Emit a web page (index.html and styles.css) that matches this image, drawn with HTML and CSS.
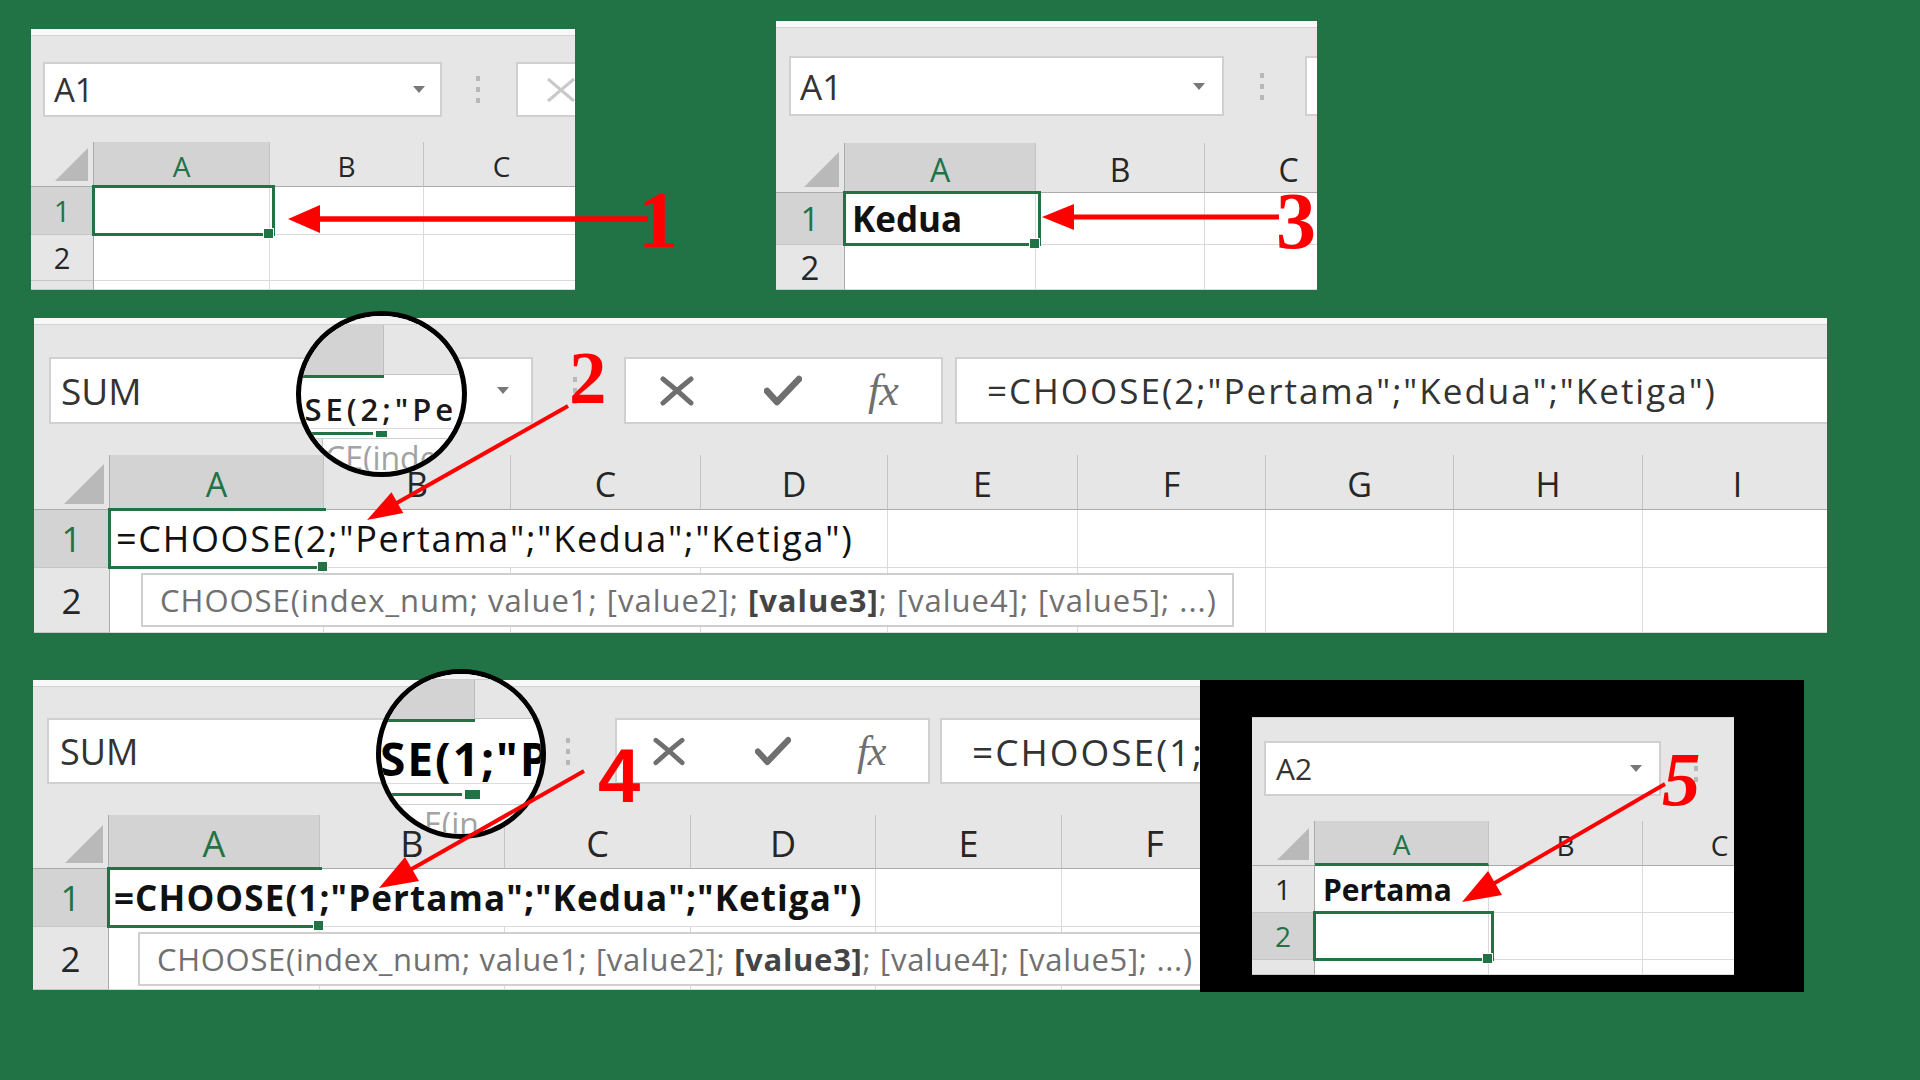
FILE: index.html
```html
<!DOCTYPE html>
<html lang="id">
<head>
<meta charset="utf-8">
<title>CHOOSE</title>
<link rel="stylesheet" href="styles.css">
</head>
<body>

<section class="shot s1">
  <div class="strip"></div>
  <div class="fbar">
    <div class="namebox"><span>A1</span><i class="caret"></i></div>
    <div class="vdots"><i></i><i></i><i></i></div>
    <div class="fxbox cutbox">
      <svg class="xlight" viewBox="0 0 30 26" width="30" height="26"><path d="M2 2 L28 24 M28 2 L2 24" stroke="#c9c9c9" stroke-width="3" fill="none"/></svg>
    </div>
  </div>
  <div class="sheet">
    <div class="corner"><i class="tri"></i></div>
    <div class="ch sel">A</div><div class="ch">B</div><div class="ch">C</div>
    <div class="rh sel">1</div><div class="c act"><i class="handle"></i></div><div class="c"></div><div class="c"></div>
    <div class="rh">2</div><div class="c"></div><div class="c"></div><div class="c"></div>
    <div class="rh"></div><div class="c"></div><div class="c"></div><div class="c"></div>
  </div>
</section>

<section class="shot s3">
  <div class="strip"></div>
  <div class="fbar">
    <div class="namebox"><span>A1</span><i class="caret"></i></div>
    <div class="vdots"><i></i><i></i><i></i></div>
    <div class="fxbox cutbox"></div>
  </div>
  <div class="sheet">
    <div class="corner"><i class="tri"></i></div>
    <div class="ch sel">A</div><div class="ch">B</div><div class="ch">C</div>
    <div class="rh sel">1</div><div class="c act bold">Kedua<i class="handle"></i></div><div class="c"></div><div class="c"></div>
    <div class="rh">2</div><div class="c"></div><div class="c"></div><div class="c"></div>
  </div>
</section>

<section class="shot s2">
  <div class="strip"></div>
  <div class="fbar">
    <div class="namebox"><span>SUM</span><i class="caret"></i></div>
    <div class="vdots"><i></i><i></i><i></i></div>
    <div class="fxbox">
      <svg class="ico" viewBox="0 0 34 30" width="34" height="30"><path d="M3 3 Q17 14 31 27 M31 3 Q16 15 3 27" stroke="#6f6f6f" stroke-width="5" fill="none" stroke-linecap="round"/></svg>
      <svg class="ico" viewBox="0 0 38 32" width="38" height="32"><path d="M3 16 L13 27 L35 4" stroke="#6f6f6f" stroke-width="6.5" fill="none" stroke-linecap="round" stroke-linejoin="round"/></svg>
      <span class="fx">fx</span>
    </div>
    <div class="formula"><span>=CHOOSE(2;"Pertama";"Kedua";"Ketiga")</span></div>
  </div>
  <div class="sheet">
    <div class="corner"><i class="tri"></i></div>
    <div class="ch sel">A</div><div class="ch">B</div><div class="ch">C</div><div class="ch">D</div><div class="ch">E</div><div class="ch">F</div><div class="ch">G</div><div class="ch">H</div><div class="ch">I</div>
    <div class="rh sel">1</div><div class="c act wide"><span>=CHOOSE(2;"Pertama";"Kedua";"Ketiga")</span><i class="handle"></i></div><div class="c"></div><div class="c"></div><div class="c"></div><div class="c"></div><div class="c"></div>
    <div class="rh">2</div><div class="c"></div><div class="c"></div><div class="c"></div><div class="c"></div><div class="c"></div><div class="c"></div><div class="c"></div><div class="c"></div><div class="c"></div>
    <div class="tip"><span>CHOOSE(index_num; value1; [value2]; <b>[value3]</b>; [value4]; [value5]; ...)</span></div>
  </div>
</section>

<section class="shot s4">
  <div class="strip"></div>
  <div class="fbar">
    <div class="namebox"><span>SUM</span><i class="caret"></i></div>
    <div class="vdots"><i></i><i></i><i></i></div>
    <div class="fxbox">
      <svg class="ico" viewBox="0 0 34 30" width="32" height="29"><path d="M3 3 Q17 14 31 27 M31 3 Q16 15 3 27" stroke="#6f6f6f" stroke-width="5" fill="none" stroke-linecap="round"/></svg>
      <svg class="ico" viewBox="0 0 38 32" width="36" height="31"><path d="M3 16 L13 27 L35 4" stroke="#6f6f6f" stroke-width="6.5" fill="none" stroke-linecap="round" stroke-linejoin="round"/></svg>
      <span class="fx">fx</span>
    </div>
    <div class="formula"><span>=CHOOSE(1;"Pertama";"Kedua";"Ketiga")</span></div>
  </div>
  <div class="sheet">
    <div class="corner"><i class="tri"></i></div>
    <div class="ch sel">A</div><div class="ch">B</div><div class="ch">C</div><div class="ch">D</div><div class="ch">E</div><div class="ch">F</div>
    <div class="rh sel">1</div><div class="c act wide bold"><span>=CHOOSE(1;"Pertama";"Kedua";"Ketiga")</span><i class="handle"></i></div><div class="c"></div><div class="c"></div>
    <div class="rh">2</div><div class="c"></div><div class="c"></div><div class="c"></div><div class="c"></div><div class="c"></div><div class="c"></div>
    <div class="tip"><span>CHOOSE(index_num; value1; [value2]; <b>[value3]</b>; [value4]; [value5]; ...)</span></div>
  </div>
</section>

<section class="frame">
  <div class="shot s5">
    <div class="fbar">
      <div class="namebox"><span>A2</span><i class="caret"></i></div>
      <div class="vdots"><i></i><i></i><i></i></div>
    </div>
    <div class="sheet">
      <div class="corner"><i class="tri"></i></div>
      <div class="ch sel selline">A</div><div class="ch">B</div><div class="ch">C</div>
      <div class="rh">1</div><div class="c bold">Pertama</div><div class="c"></div><div class="c"></div>
      <div class="rh sel">2</div><div class="c act"><i class="handle"></i></div><div class="c"></div><div class="c"></div>
      <div class="rh"></div><div class="c"></div><div class="c"></div><div class="c"></div>
    </div>
  </div>
</section>

<div class="lens l2">
  <div class="l-top"></div>
  <div class="l-head"><i class="l-hs"></i><i class="l-hr"></i></div>
  <div class="l-green"></div>
  <div class="l-row">OSE(2;"Pe</div>
  <div class="l-bot"><i class="l-gl"></i><i class="l-sq"></i></div>
  <div class="l-tip"><i class="l-rh"></i><span>CE(inde</span></div>
</div>

<div class="lens l4">
  <div class="l-top"></div>
  <div class="l-head"><i class="l-hs"></i><i class="l-hr"></i></div>
  <div class="l-green"></div>
  <div class="l-row">SE(1;"P</div>
  <div class="l-bot"><i class="l-gl"></i><i class="l-sq"></i></div>
  <div class="l-tip"><i class="l-rh"></i><span>E(in</span></div>
</div>

<svg class="annot" width="1920" height="1080" viewBox="0 0 1920 1080">
  <g stroke="#ff0000" fill="none">
    <line x1="648" y1="219" x2="316" y2="219" stroke-width="5.5"/>
    <line x1="1279" y1="217" x2="1072" y2="217" stroke-width="5"/>
    <line x1="568" y1="406" x2="395" y2="504" stroke-width="4"/>
    <line x1="584" y1="771" x2="410" y2="870" stroke-width="4"/>
    <line x1="1665" y1="784" x2="1493" y2="884" stroke-width="4"/>
  </g>
  <g fill="#ff0000">
    <polygon points="288,219 320,205 320,233"/>
    <polygon points="1042,217 1074,204 1074,230"/>
    <polygon points="367,520 391.5,492.3 403.3,513.1"/>
    <polygon points="379,888 405,857 419,881"/>
    <polygon points="1462,902 1488,871 1502,895"/>
    <text class="n-serif" x="638" y="247">1</text>
    <text class="n-serif" x="1276" y="248">3</text>
    <text class="n-serif n2" x="569" y="403">2</text>
    <text class="n-sans" x="598" y="802">4</text>
    <text class="n-serif n5" x="1662" y="805">5</text>
  </g>
</svg>

</body>
</html>
```

FILE: styles.css
```css
html, body {
  margin: 0;
  padding: 0;
}
body {
  width: 1920px;
  height: 1080px;
  overflow: hidden;
  position: relative;
  background: #217346;
  font-family: "Open Sans", "Noto Sans", sans-serif;
  color: #262626;
}

/* ---------- screenshot panels ---------- */
.shot {
  position: absolute;
  overflow: hidden;
  background: #e6e6e6;
  display: flex;
  flex-direction: column;
  box-sizing: border-box;
}
.strip {
  flex: none;
  height: 6px;
  background: #f8f8f8;
  border-bottom: 1px solid #d3d3d3;
}
.fbar {
  flex: none;
  display: flex;
  align-items: stretch;
}
.namebox {
  flex: none;
  box-sizing: border-box;
  background: #fff;
  border: 2px solid #d0d0d0;
  display: flex;
  align-items: center;
  justify-content: space-between;
  color: #333;
  white-space: nowrap;
}
.caret {
  display: block;
  width: 0;
  height: 0;
  border-left: 6px solid transparent;
  border-right: 6px solid transparent;
  border-top: 7px solid #787878;
}
.vdots {
  flex: none;
  width: 4px;
  display: flex;
  flex-direction: column;
  justify-content: center;
  gap: 6px;
}
.vdots i {
  display: block;
  width: 4px;
  height: 5px;
  background: #b8b8b8;
}
.fxbox {
  flex: none;
  box-sizing: border-box;
  background: #fff;
  border: 2px solid #d0d0d0;
  display: flex;
  align-items: center;
}
.ico { display: block; flex: none; }
.fx {
  font-family: "Liberation Serif", "DejaVu Serif", serif;
  font-style: italic;
  color: #6f6f6f;
  line-height: 1;
  letter-spacing: -1px;
}
.formula {
  flex: 1;
  box-sizing: border-box;
  background: #fff;
  border: 2px solid #d0d0d0;
  display: flex;
  align-items: center;
  color: #333;
  white-space: nowrap;
  letter-spacing: 2px;
}

.sheet {
  flex: none;
  display: grid;
  position: relative;
}
.corner {
  background: #e6e6e6;
  border-right: 1px solid #ababab;
  border-bottom: 1px solid #ababab;
  display: flex;
  align-items: flex-end;
  justify-content: flex-end;
  padding: 0 5px 5px 0;
}
.tri {
  display: block;
  width: 0;
  height: 0;
  border-left: var(--tri) solid transparent;
  border-bottom: var(--tri) solid #b9b9b9;
}
.ch {
  background: #e6e6e6;
  border-right: 1px solid #c3c3c3;
  border-bottom: 1px solid #ababab;
  display: flex;
  align-items: center;
  justify-content: center;
  padding-top: 4px;
  box-sizing: border-box;
  font-size: var(--hf);
  color: #262626;
}
.ch.sel { background: #d3d3d3; color: #217346; }
.ch.selline { border-bottom: 3px solid #217346; }
.rh {
  background: #e6e6e6;
  border-right: 1px solid #ababab;
  border-bottom: 1px solid #c6c6c6;
  display: flex;
  align-items: center;
  justify-content: center;
  font-size: var(--rf);
  color: #262626;
}
.rh.sel { background: #d3d3d3; color: #217346; }
.c {
  background: #fff;
  border-right: 1px solid #dadada;
  border-bottom: 1px solid #dadada;
  display: flex;
  align-items: center;
  padding-left: var(--cp);
  font-size: var(--cf);
  white-space: nowrap;
  color: #111;
}
.c.bold { font-weight: 700; }
.c.act { position: relative; z-index: 2; }
.c.act::after {
  content: "";
  position: absolute;
  left: -2px;
  top: -2px;
  width: calc(var(--aw) + 1px);
  bottom: -2px;
  border: 3px solid #217346;
  pointer-events: none;
}
.c.wide {
  grid-column: span 4;
  letter-spacing: 1.7px;
  border-right: 1px solid #dadada;
}
.c.wide::after { border-right: none; }
.handle {
  position: absolute;
  left: calc(var(--aw) - 7px);
  bottom: -5px;
  width: 9px;
  height: 9px;
  background: #217346;
  border: 1px solid #fff;
  z-index: 3;
}
.tip {
  position: absolute;
  box-sizing: border-box;
  background: #fff;
  border: 2px solid #cfcfcf;
  display: flex;
  align-items: center;
  white-space: nowrap;
  color: #707070;
  letter-spacing: 1px;
  z-index: 4;
}
.tip b { color: #444; font-weight: 700; }

/* panel 1 */
.s1 { left: 31px; top: 29px; width: 544px; height: 261px; --hf: 28px; --rf: 29px; --tri: 33px; --aw: 176px; }
.s1 .fbar { margin-top: 26px; height: 55px; padding-left: 12px; }
.s1 .namebox { width: 399px; padding: 0 15px 0 9px; font-size: 33px; }
.s1 .vdots { margin-left: 34px; }
.s1 .cutbox { margin-left: 36px; width: 90px; padding-left: 28px; }
.s1 .sheet { margin-top: 25px; grid-template-columns: 63px 176px 154px 156px; grid-template-rows: 45px 48px 46px 9px; }

/* panel 3 */
.s3 { left: 776px; top: 21px; width: 541px; height: 269px; --hf: 32px; --rf: 33px; --cf: 35px; --cp: 7px; --tri: 35px; --aw: 191px; }
.s3 .fbar { margin-top: 28px; height: 60px; padding-left: 13px; }
.s3 .namebox { width: 435px; padding: 0 17px 0 9px; font-size: 35px; }
.s3 .vdots { margin-left: 36px; }
.s3 .cutbox { margin-left: 41px; width: 40px; }
.s3 .sheet { margin-top: 27px; grid-template-columns: 69px 191px 169px 168px; grid-template-rows: 50px 52px 45px; }

/* panel 2 */
.s2 { left: 34px; top: 318px; width: 1793px; height: 315px; --hf: 34px; --rf: 35px; --cf: 36px; --cp: 6px; --tri: 40px; --aw: 214px; }
.s2 .fbar { margin-top: 32px; height: 67px; padding-left: 15px; }
.s2 .namebox { width: 484px; padding: 0 22px 0 10px; font-size: 37px; }
.s2 .vdots { margin-left: 40px; }
.s2 .fxbox { margin-left: 47px; width: 319px; padding-left: 34px; gap: 70px; }
.s2 .fx { font-size: 44px; margin-left: -4px; }
.s2 .formula { margin-left: 12px; margin-right: -10px; padding-left: 30px; font-size: 35px; }
.s2 .sheet { margin-top: 31px; grid-template-columns: 76px 214px 187px 190px 187px 190px 188px 188px 189px 190px; grid-template-rows: 55px 58px 65px; }
.s2 .tip { left: 107px; top: 118px; width: 1093px; height: 54px; padding-left: 17px; font-size: 31px; }

/* panel 4 */
.s4 { left: 33px; top: 680px; width: 1167px; height: 310px; --hf: 36px; --rf: 35px; --cf: 35px; --cp: 5px; --tri: 38px; --aw: 211px; }
.s4 .fbar { margin-top: 31px; height: 66px; padding-left: 14px; }
.s4 .namebox { width: 493px; padding: 0 22px 0 11px; font-size: 36px; }
.s4 .vdots { margin-left: 26px; }
.s4 .fxbox { margin-left: 45px; width: 315px; padding-left: 36px; gap: 70px; }
.s4 .fx { font-size: 42px; margin-left: -4px; }
.s4 .formula { margin-left: 10px; margin-right: -10px; padding-left: 30px; font-size: 37px; }
.s4 .c.wide { letter-spacing: 1.1px; }
.s4 .sheet { margin-top: 31px; grid-template-columns: 76px 211px 185px 186px 185px 186px 186px; grid-template-rows: 54px 58px 63px; }
.s4 .tip { left: 105px; top: 117px; width: 1100px; height: 54px; padding-left: 17px; font-size: 31px; letter-spacing: 0.7px; }

/* panel 5 (black frame) */
.frame {
  position: absolute;
  left: 1200px;
  top: 680px;
  width: 604px;
  height: 312px;
  background: #000;
  z-index: 5;
}
.s5 { left: 52px; top: 37px; width: 482px; height: 258px; border-top: 1px solid #cfcfcf; --hf: 28px; --rf: 28px; --cf: 30px; --cp: 8px; --tri: 32px; --aw: 174px; }
.s5 .fbar { margin-top: 23px; height: 55px; padding-left: 12px; }
.s5 .namebox { width: 397px; padding: 0 17px 0 10px; font-size: 30px; }
.s5 .vdots { margin-left: 33px; }
.s5 .sheet { margin-top: 25px; grid-template-columns: 63px 174px 154px 154px; grid-template-rows: 45px 47px 47px 15px; }

/* ---------- magnifier lenses ---------- */
.lens {
  position: absolute;
  box-sizing: border-box;
  border: 5px solid #000;
  border-radius: 50%;
  overflow: hidden;
  background: #fff;
  display: flex;
  flex-direction: column;
  z-index: 6;
}
.l-top {
  flex: none;
  background: #f2f2f2;
  border-bottom: 1px solid #cfcfcf;
}
.l-head { flex: none; display: flex; }
.l-head i { display: block; }
.l-hs { background: #d3d3d3; border-right: 1px solid #bdbdbd; }
.l-hr { flex: 1; background: #e6e6e6; border-bottom: 1px solid #c4c4c4; }
.l-green { flex: none; height: 3px; background: #217346; }
.l-row {
  flex: none;
  box-sizing: border-box;
  white-space: nowrap;
  color: #1a1a1a;
  border-bottom: 1px solid #dcdcdc;
}
.l-bot { flex: none; display: flex; align-items: center; border-bottom: 1px solid #cfcfcf; }
.l-bot i { display: block; }
.l-gl { height: 3px; background: #217346; }
.l-sq { background: #217346; margin-left: 3px; }
.l-tip { flex: 1; display: flex; align-items: flex-start; }
.l-rh { display: block; flex: none; align-self: stretch; background: #e6e6e6; border-right: 1px solid #c4c4c4; }
.l-tip span { color: #a3a3a3; white-space: nowrap; line-height: 1.2; }

.l2 { left: 296px; top: 311px; width: 171px; height: 166px; }
.l2 .l-top { height: 8px; }
.l2 .l-head { height: 50px; }
.l2 .l-hs { width: 82px; }
.l2 .l-green { width: 83px; }
.l2 .l-row { height: 51px; padding-top: 13px; line-height: 36px; font-size: 31px; font-weight: 600; letter-spacing: 4px; text-indent: -25px; }
.l2 .l-bot { height: 9px; }
.l2 .l-gl { width: 72px; }
.l2 .l-sq { width: 11px; height: 6px; }
.l2 .l-rh { width: 21px; }
.l2 .l-tip span { font-size: 32px; padding-left: 2px; }

.l4 { left: 376px; top: 669px; width: 170px; height: 170px; }
.l4 .l-top { height: 5px; }
.l4 .l-head { height: 39px; }
.l4 .l-hs { width: 93px; }
.l4 .l-green { width: 94px; }
.l4 .l-row { height: 62px; padding-top: 11px; line-height: 51px; font-size: 46px; font-weight: 700; letter-spacing: 2px; text-indent: -1px; color: #000; }
.l4 .l-bot { height: 20px; }
.l4 .l-gl { width: 81px; }
.l4 .l-sq { width: 15px; height: 9px; }
.l4 .l-rh { width: 24px; margin-top: 24px; }
.l4 .l-tip span { font-size: 32px; padding-left: 18px; }

/* ---------- annotations ---------- */
.annot {
  position: absolute;
  left: 0;
  top: 0;
  z-index: 10;
  pointer-events: none;
}
.n-serif {
  font-family: "Liberation Serif", "DejaVu Serif", serif;
  font-weight: 700;
  font-size: 80px;
}
.n2 { font-size: 75px; }
.n5 { font-style: italic; font-size: 77px; }
.n-sans {
  font-family: "Liberation Sans", Arial, sans-serif;
  font-weight: 700;
  font-size: 76px;
}
```
